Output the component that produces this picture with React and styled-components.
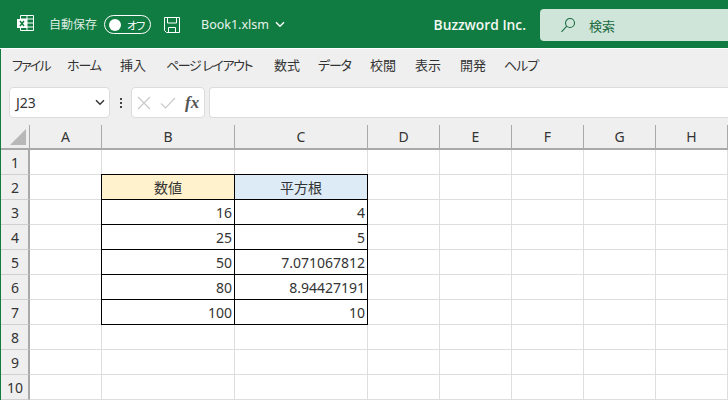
import React from "react";
import styled, {createGlobalStyle} from "styled-components";

const GlobalStyle = createGlobalStyle`
html, body {
    margin: 0;
    padding: 0;
    background: #fff;
}
body {
    font-family: "Noto Sans", "Noto Sans CJK JP", sans-serif;
    overflow: hidden;
}
`

// kana in the ribbon is set tighter than the kanji
const tabs = [
    {label: "ファイル", width: 55, tight: 1.8},
    {label: "ホーム", width: 53, tight: 1.1},
    {label: "挿入", width: 46},
    {label: "ページ レイアウト", width: 108, tight: 1.4},
    {label: "数式", width: 44},
    {label: "データ", width: 52, tight: 1.2},
    {label: "校閲", width: 45},
    {label: "表示", width: 45},
    {label: "開発", width: 44},
    {label: "ヘルプ", width: 40, tight: 1},
];

const columns = ["A", "B", "C", "D", "E", "F", "G", "H"];
const widths = [72, 133, 133, 72, 72, 72, 72, 72];

// rows 2-7 hold the table in B:C
const table = {
    2: {b: "数値", c: "平方根"},
    3: {b: "16", c: "4"},
    4: {b: "25", c: "5"},
    5: {b: "50", c: "7.071067812"},
    6: {b: "80", c: "8.94427191"},
    7: {b: "100", c: "10"},
};

const Page = styled.div`
    width: 728px;
    height: 400px;
    overflow: hidden;
    display: flex;
    flex-direction: column;
    background: #fff;
`

const TitleBar = styled.div`
    height: 48px;
    flex: none;
    background: #107c41;
    display: flex;
    align-items: center;
    color: #fff;
`

const AutoSaveLabel = styled.span`
    font-size: 12px;
    color: #dcebe2;
    margin-left: 14px;
    width: 55px;
    flex: none;
`

const Toggle = styled.div`
    width: 45px;
    height: 17px;
    flex: none;
    margin-top: 1px;
    border: 1px solid #fff;
    border-radius: 10px;
    display: flex;
    align-items: center;
`

const ToggleKnob = styled.div`
    width: 12px;
    height: 12px;
    background: #fff;
    border-radius: 50%;
    margin-left: 4px;
    flex: none;
`

const ToggleText = styled.span`
    font-size: 11px;
    margin-left: 6px;
    white-space: nowrap;
    letter-spacing: -1px;
    font-feature-settings: "palt";
`

const FileName = styled.div`
    font-size: 12.5px;
    color: #e8f2ec;
    margin-left: 21px;
    display: flex;
    align-items: center;
    gap: 6px;
    flex: none;
`

const Company = styled.div`
    font-family: "Open Sans", sans-serif;
    font-weight: 600;
    font-size: 13.8px;
    margin-left: auto;
    color: #f2f8f4;
    flex: none;
`

const SearchBox = styled.div`
    width: 188px;
    height: 32px;
    flex: none;
    box-sizing: border-box;
    margin: 2px 0 0 14px;
    background: #cfe5d9;
    border-radius: 4px 0 0 4px;
    display: flex;
    align-items: center;
    color: #1c6b41;
    font-size: 13px;
    padding-left: 20px;
    gap: 13px;
`

const Body = styled.div`
    flex: 1;
    display: flex;
    flex-direction: column;
    border-left: 1px solid #107c41;
    margin-top: 1px;
`

const Ribbon = styled.div`
    height: 38px;
    flex: none;
    background: #efefef;
    display: flex;
    align-items: center;
    padding-left: 11px;
    box-sizing: border-box;
    padding-bottom: 8px;
`

const Tab = styled.span`
    font-size: 13px;
    color: #333;
    width: ${props => props.$width}px;
    flex: none;
    white-space: nowrap;
    font-feature-settings: "palt";
    letter-spacing: ${props => props.$tight ? -props.$tight : 0}px;
`

const FormulaBar = styled.div`
    height: 38px;
    flex: none;
    background: #efefef;
    display: flex;
    align-items: flex-start;
    padding-left: 8px;
    box-sizing: border-box;
`

const NameBox = styled.div`
    width: 101px;
    height: 31px;
    box-sizing: border-box;
    background: #fff;
    border: 1px solid #dcdcdc;
    border-radius: 4px;
    display: flex;
    align-items: center;
    justify-content: space-between;
    padding: 0 4px 0 6px;
    font-size: 14px;
    color: #333;
`

const Dots = styled.div`
    width: 21px;
    height: 31px;
    display: flex;
    flex-direction: column;
    align-items: center;
    justify-content: center;
    gap: 2px;
`

const Dot = styled.i`
    width: 2px;
    height: 2px;
    background: #444;
    display: block;
`

const FormulaButtons = styled.div`
    width: 74px;
    height: 31px;
    box-sizing: border-box;
    background: #fff;
    border: 1px solid #dcdcdc;
    border-radius: 4px;
    display: flex;
    align-items: center;
    padding-left: 5px;
    gap: 9px;
`

const FxLabel = styled.span`
    font-family: "Liberation Serif", serif;
    font-style: italic;
    font-weight: bold;
    font-size: 17px;
    color: #555;
`

const FormulaInput = styled.div`
    flex: 1;
    height: 31px;
    margin-left: 4px;
    box-sizing: border-box;
    background: #fff;
    border: 1px solid #dcdcdc;
    border-right: none;
    border-radius: 4px 0 0 4px;
`

const Sheet = styled.div`
    display: grid;
    grid-template-columns: 29px ${widths.map(w => w + "px").join(" ")};
    grid-template-rows: 25px repeat(10, 25px);
    font-size: 14px;
    color: #333;
`

const Corner = styled.div`
    background: #efefef;
    border-right: 1px solid #a9a9a9;
    border-bottom: 2px solid #a9a9a9;
    box-sizing: border-box;
    position: relative;
    &::after {
        content: "";
        position: absolute;
        right: 3px;
        bottom: 3px;
        border-style: solid;
        border-width: 0 0 16px 16px;
        border-color: transparent transparent #b8b8b8 transparent;
    }
`

const ColHead = styled.div`
    background: #efefef;
    border-right: 1px solid #a9a9a9;
    border-bottom: 2px solid #a9a9a9;
    box-sizing: border-box;
    display: flex;
    align-items: center;
    justify-content: center;
`

const RowHead = styled.div`
    background: #efefef;
    border-right: 2px solid #a9a9a9;
    border-bottom: 1px solid #d0d0d0;
    box-sizing: border-box;
    display: flex;
    align-items: center;
    justify-content: center;
    padding-left: 1px;
`

const Cell = styled.div`
    border-right: 1px solid #dedede;
    border-bottom: 1px solid #dedede;
    box-sizing: border-box;
`

const DataCell = styled.div`
    border-right: 1px solid #000;
    border-bottom: 1px solid #000;
    box-sizing: border-box;
    display: flex;
    align-items: center;
    padding: 0 2px;
    justify-content: ${props => props.$head ? "center" : "flex-end"};
    background: ${props => props.$fill || "#fff"};
    ${props => props.$left && "box-shadow: -1px 0 0 #000;"}
    ${props => props.$top && "box-shadow: 0 -1px 0 #000" + (props.$left ? ", -1px 0 0 #000, -1px -1px 0 #000;" : ";")}
`

const ExcelIcon = () => (
    <svg width="18" height="18" viewBox="0 0 18 18" style={{marginLeft: 17, flex: "none"}}>
        <path d="M3.5.5h13v15h-13zM10 .5v15M3.5 4h13M3.5 8h13M3.5 12h13" fill="none" stroke="#fff"/>
        <rect x="0" y="4" width="10" height="9" fill="#fff"/>
        <path d="M3 6l4 5M7 6l-4 5" stroke="#107c41" strokeWidth="1.5"/>
    </svg>
);

const SaveIcon = () => (
    <svg width="16" height="16" viewBox="0 0 16 16" style={{marginLeft: 13, marginTop: 1, flex: "none"}}>
        <path d="M.5.5h15v15H2.5l-2-2z" fill="none" stroke="#fff"/>
        <path d="M3.5 1v5h9V1M4.5 15.5v-5h7v5" fill="none" stroke="#fff"/>
    </svg>
);

const Chevron = ({color = "#fff", width = 1.4}) => (
    <svg width="10" height="7" viewBox="0 0 10 7">
        <path d="M1 1.2l4 4 4-4" fill="none" stroke={color} strokeWidth={width}/>
    </svg>
);

const SearchIcon = () => (
    <svg width="16" height="16" viewBox="0 0 16 16">
        <circle cx="10" cy="6" r="4.5" fill="none" stroke="#1c6b41" strokeWidth="1.1"/>
        <path d="M6.8 9.2L1.5 14.8" stroke="#1c6b41" strokeWidth="1.1"/>
    </svg>
);

const CrossIcon = () => (
    <svg width="14" height="14" viewBox="0 0 14 14">
        <path d="M1 1l12 12M13 1L1 13" stroke="#c8c8c8" strokeWidth="1.1"/>
    </svg>
);

const CheckIcon = () => (
    <svg width="16" height="12" viewBox="0 0 16 12">
        <path d="M1 6.5l4.5 4.5L15 1" fill="none" stroke="#c8c8c8" strokeWidth="1.1"/>
    </svg>
);

const renderCell = (row, col) => {
    const data = table[row];
    const key = row + col;
    if (data && col === "B") {
        return <DataCell key={key} $head={row === 2} $fill={row === 2 ? "#fff2cc" : null} $left $top={row === 2}>{data.b}</DataCell>
    }
    if (data && col === "C") {
        return <DataCell key={key} $head={row === 2} $fill={row === 2 ? "#ddebf7" : null} $top={row === 2}>{data.c}</DataCell>
    }
    return <Cell key={key}/>
}

export default function App() {
    return (<Page>
        <GlobalStyle/>
        <TitleBar>
            <ExcelIcon/>
            <AutoSaveLabel>自動保存</AutoSaveLabel>
            <Toggle>
                <ToggleKnob/>
                <ToggleText>オフ</ToggleText>
            </Toggle>
            <SaveIcon/>
            <FileName>Book1.xlsm <Chevron/></FileName>
            <Company>Buzzword Inc.</Company>
            <SearchBox><SearchIcon/>検索</SearchBox>
        </TitleBar>
        <Body>
            <Ribbon>
                {tabs.map(t => <Tab key={t.label} $width={t.width} $tight={t.tight}>{t.label}</Tab>)}
            </Ribbon>
            <FormulaBar>
                <NameBox>J23 <Chevron color="#333"/></NameBox>
                <Dots><Dot/><Dot/><Dot/></Dots>
                <FormulaButtons><CrossIcon/><CheckIcon/><FxLabel>fx</FxLabel></FormulaButtons>
                <FormulaInput/>
            </FormulaBar>
            <Sheet>
                <Corner/>
                {columns.map(c => <ColHead key={c}>{c}</ColHead>)}
                {[1, 2, 3, 4, 5, 6, 7, 8, 9, 10].map(r => (<React.Fragment key={r}>
                    <RowHead>{r}</RowHead>
                    {columns.map(c => renderCell(r, c))}
                </React.Fragment>))}
            </Sheet>
        </Body>
    </Page>)
}
